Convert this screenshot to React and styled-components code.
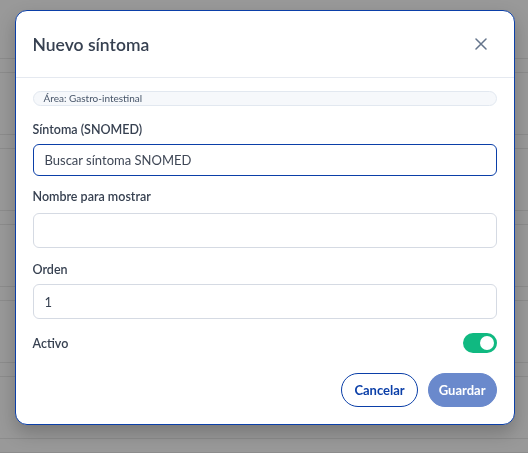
import React from "react";
import styled, { createGlobalStyle } from "styled-components";

const Global = createGlobalStyle`
  html, body { margin: 0; padding: 0; }
  body {
    background: #999999;
    font-family: Lato, "Noto Sans", "Liberation Sans", sans-serif;
    overflow: hidden;
  }
  * { box-sizing: border-box; }
`;

const Backdrop = styled.div`
  height: 453px;
  padding-top: 58px;
  display: flex;
  flex-direction: column;
  gap: 61px;
`;

const BgRow = styled.div`
  height: 15px;
  border-top: 1px solid #8c8c8c;
  border-bottom: 1px solid #8c8c8c;
`;

const Overlay = styled.div`
  position: fixed;
  inset: 0;
  display: flex;
  justify-content: center;
  align-items: flex-start;
  padding-top: 10px;
`;

const Modal = styled.div`
  width: 500px;
  height: 415px;
  margin-left: 1px;
  background: #ffffff;
  border: 1px solid #0b3fa8;
  border-radius: 12px;
  box-shadow: 0 8px 18px rgba(0, 0, 0, 0.22);
  display: flex;
  flex-direction: column;
`;

const Header = styled.div`
  height: 68px;
  padding: 0 17px;
  display: flex;
  align-items: center;
  justify-content: space-between;
  border-bottom: 1px solid #e5e9f0;
`;

const Title = styled.h2`
  margin: 0;
  font-size: 17.5px;
  font-weight: 600;
  color: #374151;
`;

const CloseButton = styled.button`
  width: 24px;
  height: 24px;
  margin-right: 4px;
  padding: 0;
  border: none;
  background: transparent;
  display: flex;
  align-items: center;
  justify-content: center;
  color: #64748b;
`;

const Body = styled.div`
  padding: 13px 17px 17px;
  display: flex;
  flex-direction: column;
  flex: 1;
`;

const Pill = styled.div`
  height: 15px;
  border: 1px solid #e2e8f0;
  background: #f6f8fb;
  border-radius: 8px;
  padding-left: 10px;
  font-size: 10px;
  line-height: 13px;
  color: #475569;
  margin-bottom: 15px;
`;

const Label = styled.label`
  display: block;
  font-size: 12.5px;
  line-height: 18px;
  font-weight: 600;
  color: #374151;
  margin-bottom: ${(p) => p.$mb || 5}px;
`;

const Field = styled.div`
  margin-bottom: ${(p) => p.$mb}px;
`;

const Input = styled.input`
  display: block;
  width: 100%;
  height: ${(p) => p.$h || 35}px;
  border: 1px solid ${(p) => (p.$focus ? "#0b3fa8" : "#d5dae3")};
  border-radius: 6px;
  padding: 0 11px;
  font-family: inherit;
  font-size: 13px;
  color: #374151;
  caret-color: #1f2937;
  background: #fff;
  outline: none;
  &::placeholder { color: #3f4756; }
`;

const ToggleRow = styled.div`
  display: flex;
  align-items: center;
  justify-content: space-between;
  height: 20px;
  margin-bottom: 20px;
`;

const ToggleLabel = styled.span`
  font-size: 12.5px;
  font-weight: 600;
  color: #374151;
`;

const Switch = styled.div`
  width: 34px;
  height: 20px;
  border-radius: 10px;
  background: #10b981;
  padding: 3px;
  display: flex;
  justify-content: ${(p) => (p.$on ? "flex-end" : "flex-start")};
`;

const Knob = styled.span`
  width: 14px;
  height: 14px;
  border-radius: 50%;
  background: #ffffff;
`;

const Footer = styled.div`
  display: flex;
  justify-content: flex-end;
  gap: 10px;
`;

const Button = styled.button`
  height: 34px;
  border-radius: 17px;
  font-family: inherit;
  font-size: 13px;
  font-weight: 700;
  padding: 0 ${(p) => (p.$primary ? 10 : 12)}px;
  border: 1px solid ${(p) => (p.$primary ? "#6a89cc" : "#0b3fa8")};
  background: ${(p) => (p.$primary ? "#6a89cc" : "#ffffff")};
  color: ${(p) => (p.$primary ? "#ffffff" : "#0b3fa8")};
`;

export default function App() {
  return (
    <>
      <Global />
      <Backdrop>
        {Array.from({ length: 6 }).map((_, i) => (
          <BgRow key={i} />
        ))}
      </Backdrop>
      <Overlay>
        <Modal>
          <Header>
            <Title>Nuevo síntoma</Title>
            <CloseButton aria-label="Cerrar">
              <svg width="12" height="12" viewBox="0 0 12 12" fill="none">
                <path d="M1 1L11 11M11 1L1 11" stroke="currentColor" strokeWidth="1.5" strokeLinecap="round" />
              </svg>
            </CloseButton>
          </Header>
          <Body>
            <Pill>Área: Gastro-intestinal</Pill>
            <Field $mb={12}>
              <Label>Síntoma (SNOMED)</Label>
              <Input $focus $h={32} autoFocus placeholder="Buscar síntoma SNOMED" />
            </Field>
            <Field $mb={13}>
              <Label $mb={7}>Nombre para mostrar</Label>
              <Input />
            </Field>
            <Field $mb={14}>
              <Label>Orden</Label>
              <Input defaultValue="1" />
            </Field>
            <ToggleRow>
              <ToggleLabel>Activo</ToggleLabel>
              <Switch $on>
                <Knob />
              </Switch>
            </ToggleRow>
            <Footer>
              <Button>Cancelar</Button>
              <Button $primary>Guardar</Button>
            </Footer>
          </Body>
        </Modal>
      </Overlay>
    </>
  );
}
